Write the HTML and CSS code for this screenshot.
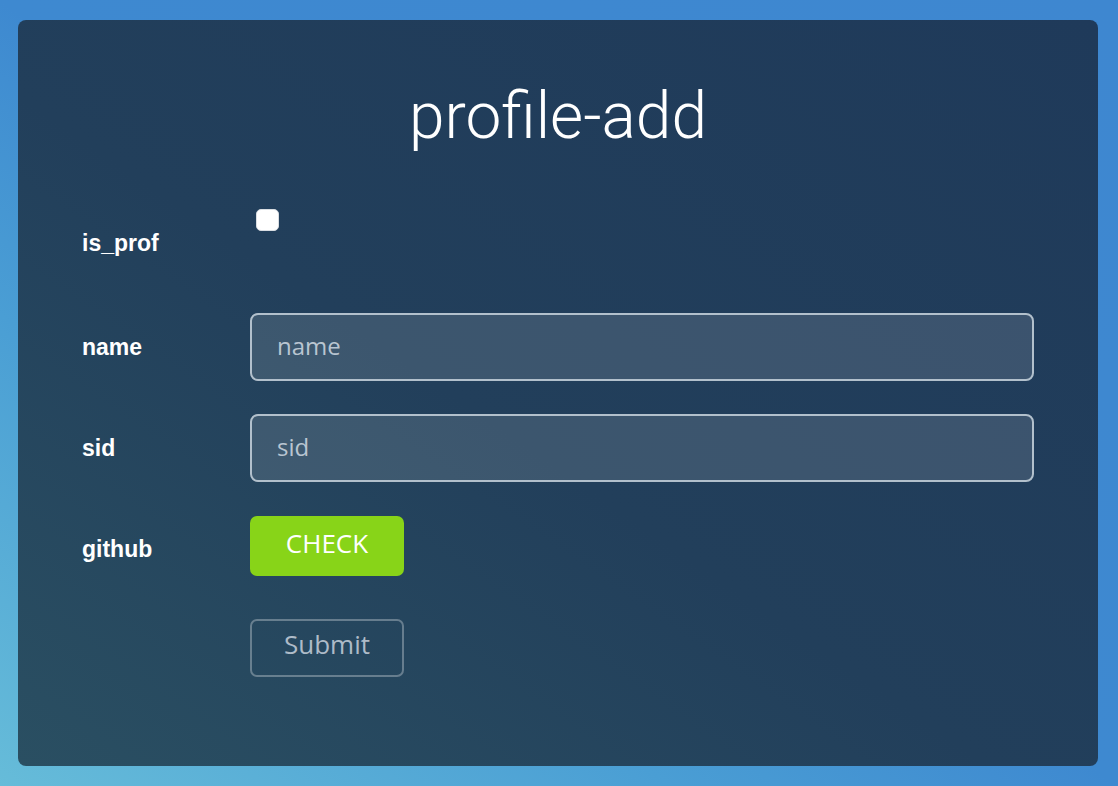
FILE: index.html
```html
<!DOCTYPE html>
<html lang="en">
<head>
<meta charset="utf-8">
<title>profile-add</title>
<link rel="stylesheet" href="styles.css">
</head>
<body>
<main class="card">
  <h1 class="title">profile-add</h1>
  <form class="form">
    <div class="row row-check">
      <label class="label" for="is_prof">is_prof</label>
      <div class="control"><input type="checkbox" id="is_prof" class="checkbox"></div>
    </div>
    <div class="row row-input">
      <label class="label" for="name">name</label>
      <div class="control"><input type="text" id="name" class="field" placeholder="name"></div>
    </div>
    <div class="row row-input">
      <label class="label" for="sid">sid</label>
      <div class="control"><input type="text" id="sid" class="field" placeholder="sid"></div>
    </div>
    <div class="row row-github">
      <span class="label">github</span>
      <div class="control"><button type="button" class="btn btn-check">CHECK</button></div>
    </div>
    <div class="row row-submit">
      <span class="label"></span>
      <div class="control"><button type="submit" class="btn btn-submit">Submit</button></div>
    </div>
  </form>
</main>
</body>
</html>
```

FILE: styles.css
```css
* { box-sizing: border-box; }

html, body { height: 100%; }

body {
  margin: 0;
  padding: 20px 20px 20px 18px;
  background: linear-gradient(to top right, #66bcd9 0%, #4a9ed4 30%, #3e89d0 50%, #3e87d0 100%);
  font-family: "Open Sans", sans-serif;
}

.card {
  width: 1080px;
  height: 746px;
  border-radius: 8px;
  background: linear-gradient(to top right, #2a4f62 0%, #223f5b 45%, #1f3a5a 100%);
  padding: 61px 64px 0 64px;
}

.title {
  margin: 0;
  text-align: center;
  font-family: Roboto, sans-serif;
  font-weight: 300;
  font-size: 64px;
  line-height: 72px;
  color: #ffffff;
}

.form {
  display: flex;
  flex-direction: column;
  margin-top: 56px;
}

.row {
  display: flex;
  align-items: center;
}

.label {
  width: 168px;
  flex: none;
  font-family: "Liberation Sans", Arial, sans-serif;
  font-weight: bold;
  font-size: 23px;
  color: #ffffff;
}

.control {
  flex: 1;
  display: flex;
}

.row-check {
  height: 68px;
  align-items: center;
}

.row-check .control {
  align-self: flex-start;
}

.checkbox {
  appearance: none;
  -webkit-appearance: none;
  margin: 0 0 0 6px;
  width: 23px;
  height: 22px;
  border-radius: 5px;
  background: #ffffff;
  border: 1px solid #d9dde2;
}

.row-input { margin-top: 36px; }
.row-input + .row-input { margin-top: 33px; }

.field {
  width: 784px;
  height: 68px;
  border: 2px solid #b2c0cc;
  border-radius: 8px;
  background: rgba(255, 255, 255, 0.12);
  padding: 0 25px 4px;
  font-family: "Open Sans", sans-serif;
  font-size: 24px;
  color: #ffffff;
  outline: none;
}

.field::placeholder { color: #b9c5d1; }

.row-github { margin-top: 34px; }
.row-github .label { padding-top: 6px; }
.row-submit { margin-top: 43px; }

.btn {
  width: 154px;
  font-family: "Open Sans", sans-serif;
  font-size: 26px;
  border-radius: 7px;
  cursor: pointer;
  padding: 0;
}

.btn-check {
  height: 60px;
  background: #88d418;
  border: none;
  color: #ffffff;
  padding-bottom: 6px;
}

.btn-submit {
  height: 58px;
  background: transparent;
  border: 2px solid rgba(255, 255, 255, 0.3);
  color: #aebbc8;
  padding-bottom: 8px;
}
```
